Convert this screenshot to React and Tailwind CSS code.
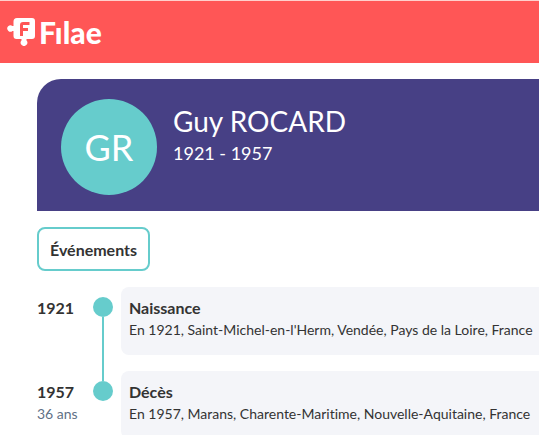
const person = {
  name: 'Guy ROCARD',
  initials: 'GR',
  years: '1921 - 1957',
};

const events = [
  {
    year: '1921',
    title: 'Naissance',
    detail: "En 1921, Saint-Michel-en-l'Herm, Vendée, Pays de la Loire, France",
  },
  {
    year: '1957',
    age: '36 ans',
    title: 'Décès',
    detail: 'En 1957, Marans, Charente-Maritime, Nouvelle-Aquitaine, France',
  },
];

function Logo() {
  return (
    <a href="#" className="flex items-center gap-1 text-white">
      <svg width="28" height="28" viewBox="0 0 28 28" fill="none" aria-hidden="true">
        <path
          fill="currentColor"
          d="M10 0H25Q28 0 28 3V18Q28 21 25 21H19.500V22.500A3.300 3.300 0 1 1 14.500 22.500V21H9.500Q6.500 21 6.500 18V13H5.500A3.200 3.200 0 1 1 5.500 8H6.500V3.500Q6.500 0 10 0Z"
        />
        <path stroke="#ff5656" strokeWidth="3" d="M22.500 5.500H16Q14.500 5.500 14.500 7V18M14.500 11.500H21" />
      </svg>
      <span className="font-['Lato'] text-3xl font-black">Fılae</span>
    </a>
  );
}

function TimelineEvent({ event, isLast }) {
  return (
    <li className="flex">
      <div className="w-14 shrink-0 pt-[9px]">
        <p className="font-bold leading-6">{event.year}</p>
        {event.age && <p className="text-sm leading-5 text-[#5f7186]">{event.age}</p>}
      </div>

      {/* Dot and connector */}
      <div className="flex w-5 shrink-0 flex-col items-center pt-2.5">
        <span className="size-5 shrink-0 rounded-full bg-[#66cccc]" />
        {!isLast && <span className="-mb-2.5 w-0.5 grow bg-[#66cccc]" />}
      </div>

      <div className={isLast ? 'grow pl-2' : 'grow pb-4 pl-2'}>
        <div className="h-17 rounded-l-lg bg-[#f4f5f9] px-2 pt-[9px]">
          <h2 className="font-bold leading-6">{event.title}</h2>
          <p className="whitespace-nowrap text-sm leading-5">{event.detail}</p>
        </div>
      </div>
    </li>
  );
}

export default function App() {
  return (
    <div className="min-h-screen overflow-hidden bg-white font-['Lato',sans-serif] text-[#333333] [font-variant-ligatures:none]">
      <header className="flex h-[63px] items-center border-t border-[#ffd0cc] bg-[#ff5656] px-[7px]">
        <Logo />
      </header>

      <main className="pl-[37px] pt-4">
        <section className="flex h-33 gap-4 rounded-tl-3xl bg-[#474085] px-6 py-5 text-white">
          <div className="flex size-24 shrink-0 items-center justify-center rounded-full bg-[#66cccc] text-4xl">
            {person.initials}
          </div>
          <div className="pt-1">
            <h1 className="text-[28px] leading-9">{person.name}</h1>
            <p className="text-lg leading-7">{person.years}</p>
          </div>
        </section>

        <button type="button" className="mt-4 h-11 rounded-lg border-2 border-[#66cccc] px-[11px] pt-0.5 font-bold">
          Événements
        </button>

        <ol className="mt-4">
          {events.map((event, i) => (
            <TimelineEvent key={event.year} event={event} isLast={i === events.length - 1} />
          ))}
        </ol>
      </main>
    </div>
  );
}
